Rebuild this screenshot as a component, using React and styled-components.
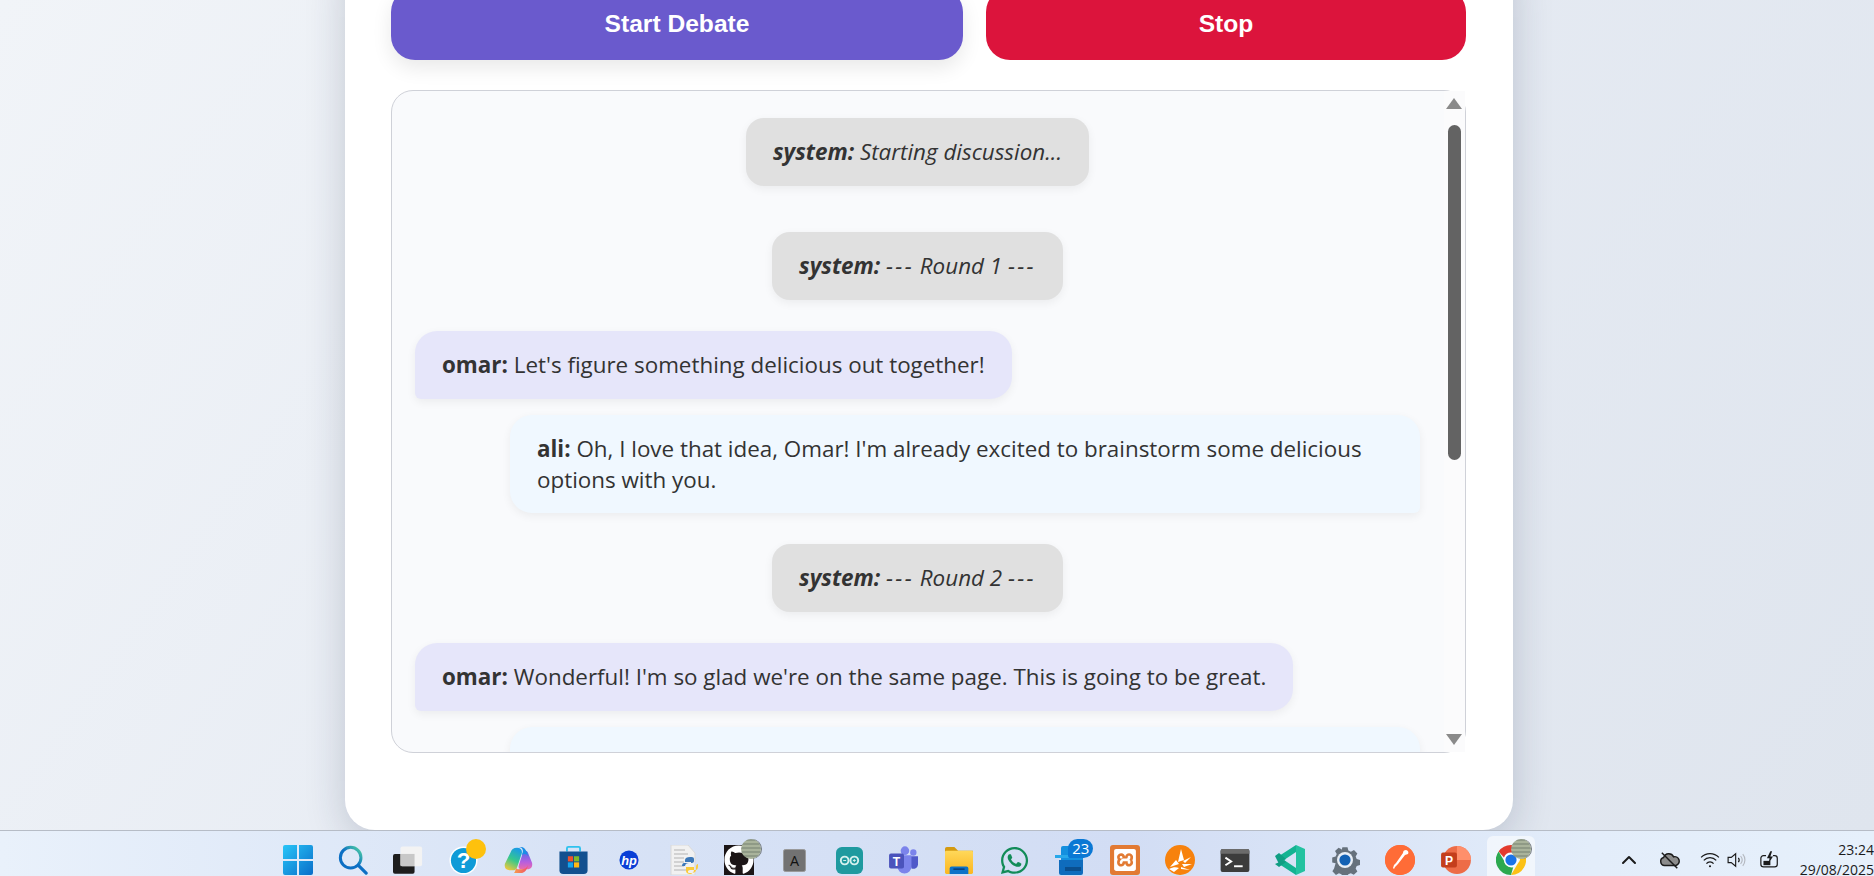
import React from "react";
import styled, { createGlobalStyle } from "styled-components";
import { FaGithub, FaWhatsapp } from "react-icons/fa";
import { SiXampp, SiPostman } from "react-icons/si";
import { FiChevronUp } from "react-icons/fi";

const GlobalStyle = createGlobalStyle`
  html, body {
    margin: 0;
    padding: 0;
    height: 100%;
    overflow: hidden;
  }
  #root {
    height: 100%;
  }
`;

const Page = styled.div`
  height: 876px;
  display: flex;
  flex-direction: column;
  font-family: "Open Sans", "Noto Sans", sans-serif;
`;

const Stage = styled.main`
  flex: 1;
  min-height: 0;
  overflow: hidden;
  display: flex;
  flex-direction: column;
  justify-content: flex-end;
  align-items: flex-start;
  padding-left: 345px;
  background: linear-gradient(125deg, #f1f4f8 0%, #e6ebf3 50%, #dfe5ee 100%);
`;

const Card = styled.section`
  flex-shrink: 0;
  box-sizing: border-box;
  width: 1168px;
  padding: 40px 47px 77px 46px;
  background: #fff;
  border-radius: 30px;
  box-shadow: 0 10px 40px rgba(30, 40, 70, 0.2);
`;

const Actions = styled.div`
  display: flex;
  gap: 23px;
  margin-bottom: 30px;
`;

const ActionButton = styled.button`
  flex: 0 0 ${(p) => p.$w}px;
  height: 72px;
  border: none;
  border-radius: 24px;
  color: #fff;
  font-family: "Liberation Sans", Arial, sans-serif;
  font-size: 24.6px;
  font-weight: 700;
  background: ${(p) => p.$bg};
  box-shadow: ${(p) => (p.$glow ? "0 8px 20px rgba(0, 0, 0, 0.09)" : "none")};
`;

const ChatBox = styled.div`
  position: relative;
  box-sizing: border-box;
  height: 663px;
  border: 1px solid #cfd1d8;
  border-radius: 22px;
  background: #f9fafc;
`;

const Messages = styled.div`
  height: 100%;
  box-sizing: border-box;
  overflow: hidden;
  border-radius: 22px;
  padding: 11.5px 45px 0 23px;
  display: flex;
  flex-direction: column;
  gap: 16px;
`;

const Bubble = styled.div`
  flex-shrink: 0;
  box-sizing: border-box;
  padding: 18.5px 27px;
  font-size: 22.4px;
  line-height: 31px;
  color: #333;
  border-radius: 22px;
  box-shadow: 0 3px 10px rgba(0, 0, 0, 0.06);
`;

const OmarBubble = styled(Bubble)`
  align-self: flex-start;
  background: #e6e6fa;
  border-bottom-left-radius: 6px;
`;

const AliBubble = styled(Bubble)`
  align-self: flex-end;
  width: 910px;
  min-height: 68px;
  padding-top: 18px;
  padding-bottom: 18px;
  background: #f0f8ff;
  border-bottom-right-radius: 6px;
`;

const SystemBubble = styled(Bubble)`
  align-self: center;
  margin: 15px 0;
  background: #e0e0e0;
  border-radius: 18px;
  font-style: italic;
`;

const Dashes = styled.span`
  letter-spacing: 2.3px;
`;

const ScrollTrack = styled.div`
  position: absolute;
  top: 0;
  right: 0;
  bottom: 0;
  width: 21px;
  background: #fbfbfc;
`;

const ScrollArrow = styled.div`
  position: absolute;
  left: 2px;
  ${(p) => (p.$down ? "bottom: 7px;" : "top: 7px;")}
  width: 0;
  height: 0;
  border-left: 8px solid transparent;
  border-right: 8px solid transparent;
  ${(p) => (p.$down ? "border-top" : "border-bottom")}: 11px solid #8a8a8a;
`;

const ScrollThumb = styled.div`
  position: absolute;
  top: 34px;
  left: 4px;
  width: 13px;
  height: 335px;
  border-radius: 7px;
  background: #636363;
`;

const Taskbar = styled.footer`
  flex: 0 0 46px;
  display: flex;
  align-items: stretch;
  box-sizing: border-box;
  padding-left: 270.4px;
  border-top: 1px solid #b6bcc6;
  overflow: hidden;
  background: linear-gradient(90deg, #e9f1fb 0%, #d8e3f6 30%, #d2ddf4 60%, #e3edfa 85%, #e6f0fb 100%);
`;

const Tile = styled.div`
  position: relative;
  flex: 0 0 55.14px;
  box-sizing: border-box;
  padding-top: 13px;
  display: flex;
  align-items: center;
  justify-content: center;
  &::before {
    content: "";
    display: ${(p) => (p.$active ? "block" : "none")};
    position: absolute;
    left: 4px;
    right: 3px;
    top: 5px;
    bottom: 0;
    border-radius: 6px 6px 0 0;
    background: rgba(255, 255, 255, 0.55);
  }
  svg {
    position: relative;
    display: block;
  }
`;

const Dot = styled.span`
  position: absolute;
  top: 8px;
  left: 30px;
  width: 20px;
  height: 20px;
  border-radius: 50%;
  background: #fec10d;
`;

const CountBadge = styled.span`
  position: absolute;
  top: 8px;
  left: 26px;
  padding: 0 4px;
  height: 19px;
  line-height: 19px;
  border-radius: 10px 10px 10px 3px;
  background: #0a78d4;
  color: #fff;
  font-size: 15px;
`;

const Spinner = styled.span`
  position: absolute;
  top: 8px;
  left: ${(p) => p.$left}px;
  width: 20px;
  height: 20px;
  border-radius: 50%;
  background: repeating-linear-gradient(0deg, #a9b39b 0 2px, #8f9a86 2px 4px);
  box-shadow: 1px 0 0 #70757c;
`;

const Tray = styled.div`
  flex: 1;
  min-width: 0;
  display: flex;
  align-items: center;
  padding: 12px 0 0 79px;
  color: #1b1b1b;
`;

const TraySlot = styled.span`
  flex: 0 0 ${(p) => p.$w}px;
  display: flex;
  justify-content: center;
`;

const Clock = styled.div`
  margin-left: auto;
  flex-shrink: 0;
  text-align: right;
  font-size: 14px;
  line-height: 20px;
  color: #1b1b1b;
  white-space: nowrap;
`;

const WindowsIcon = () => (
  <svg width="30" height="30" viewBox="0 0 30 30">
    <defs>
      <linearGradient id="win" x1="0" y1="0" x2="1" y2="1">
        <stop offset="0" stopColor="#28c5f8" />
        <stop offset="1" stopColor="#0a6ec9" />
      </linearGradient>
    </defs>
    <path fill="url(#win)" d="M2 0h12v14H0V2a2 2 0 0 1 2-2zM16 0h12a2 2 0 0 1 2 2v12H16zM0 16h14v14H2a2 2 0 0 1-2-2zM16 16h14v12a2 2 0 0 1-2 2H16z" />
  </svg>
);

const SearchIcon = () => (
  <svg width="30" height="30" viewBox="0 0 32 32" fill="none">
    <defs>
      <linearGradient id="lens" x1="0" y1="1" x2="1" y2="0">
        <stop offset="0.5" stopColor="#0c6fc4" />
        <stop offset="1" stopColor="#52d6a0" />
      </linearGradient>
    </defs>
    <circle cx="13.5" cy="13.5" r="11" stroke="url(#lens)" strokeWidth="3.2" />
    <path d="M22 22l8 8" stroke="#0c6fc4" strokeWidth="3.4" strokeLinecap="round" />
  </svg>
);

const TaskViewIcon = () => (
  <svg width="30" height="29" viewBox="0 0 32 30">
    <rect x="0" y="8" width="23" height="21" rx="2" fill="#1d1d1d" />
    <rect x="8" y="0" width="23" height="21" rx="2" fill="#f3f3f3" />
    <rect x="8" y="8" width="15" height="13" fill="#c8c8c8" />
  </svg>
);

const HelpIcon = () => (
  <svg width="29" height="29" viewBox="0 0 30 30">
    <circle cx="15" cy="15" r="14.5" fill="#fff" />
    <circle cx="15" cy="15" r="13" fill="#0f9bd7" />
    <text x="15" y="23" textAnchor="middle" fontFamily="Liberation Sans" fontWeight="700" fontSize="23" fill="#fff">?</text>
  </svg>
);

const CopilotIcon = () => (
  <svg width="30" height="28" viewBox="0 0 32 30">
    <defs>
      <linearGradient id="cpA" x1="0.6" y1="0" x2="0.2" y2="1">
        <stop offset="0" stopColor="#1b9de2" />
        <stop offset="0.5" stopColor="#37c88c" />
        <stop offset="1" stopColor="#f3c83a" />
      </linearGradient>
      <linearGradient id="cpB" x1="0.5" y1="0" x2="0.5" y2="1">
        <stop offset="0" stopColor="#4a6ce8" />
        <stop offset="0.6" stopColor="#b45fe0" />
        <stop offset="1" stopColor="#ee6aa8" />
      </linearGradient>
      <linearGradient id="cpC" x1="0" y1="0" x2="1" y2="0">
        <stop offset="0" stopColor="#f7a24a" />
        <stop offset="1" stopColor="#f0506a" />
      </linearGradient>
    </defs>
    <path fill="url(#cpB)" d="M21 8l-4 12c-1 3 0 5 3 5h6c4 0 6-3 5-7L27 8c-1-4-5-4-6 0z" />
    <path fill="url(#cpA)" d="M15 2c-4 0-6 2-7 5L2 19c-1 4 1 7 5 7h4c3 0 4-3 5-6l4-12c1-3-1-6-5-6z" />
    <path fill="#1a8fe6" d="M13 1h6c3 0 5 2 6 5l2 5c-2-3-5-3-7-1l1-3c1-3-1-6-4-6z" />
    <path fill="url(#cpC)" d="M11 29h8c4 0 6-3 7-6l1-3c-1 3-4 5-7 5h-3c-2 0-3-1-3-2-1 3-1 6-3 6z" />
  </svg>
);

const StoreIcon = () => (
  <svg width="29" height="30" viewBox="0 0 30 32">
    <path d="M8 7V3.500A1.500 1.500 0 0 1 9.500 2h11A1.500 1.500 0 0 1 22 3.500V7" fill="none" stroke="#2fc2ee" strokeWidth="2" />
    <path d="M0 7h30v20a4 4 0 0 1-4 4H4a4 4 0 0 1-4-4z" fill="#12508f" />
    <rect x="9" y="12" width="5.5" height="5.5" fill="#f0512c" />
    <rect x="15.5" y="12" width="5.5" height="5.5" fill="#7fba2a" />
    <rect x="9" y="18.5" width="5.5" height="5.5" fill="#12a5ef" />
    <rect x="15.5" y="18.5" width="5.5" height="5.5" fill="#fdb813" />
  </svg>
);

const HpIcon = () => (
  <svg width="20" height="20" viewBox="0 0 22 22">
    <circle cx="11" cy="11" r="10.5" fill="#0a3fd6" />
    <text x="11" y="16" textAnchor="middle" fontFamily="Liberation Sans" fontStyle="italic" fontWeight="700" fontSize="14" fill="#fff">hp</text>
  </svg>
);

const PyFileIcon = () => (
  <svg width="30" height="30" viewBox="0 0 30 30">
    <path d="M2 0h17l7 8v22H2z" fill="#f1f1f1" stroke="#d9d9d9" />
    <path d="M5 5h11M5 9h14M5 13h10M5 17h10M5 21h10M5 25h12" stroke="#c8c8c8" strokeWidth="1.6" />
    <path d="M21 12c-3 0-5 1-5 3v2h6v1h-7c-1 0-2 1-2 3h3c0-2 2-3 4-3h3c1 0 2-1 2-2v-2c0-2-2-2-4-2z" fill="#3d78b8" />
    <path d="M22 28c3 0 5-1 5-3v-3c0-2 1-3 2-3v2c0 3-1 4-3 4h-5c-1 0-2 1-2 1v1c0 1 1 1 3 1zM17 22h8v3c0 2-2 4-4 4s-4-1-4-3z" fill="#fbcb3b" />
  </svg>
);

const GithubTile = () => (
  <svg width="30" height="30" viewBox="0 0 30 30">
    <rect width="30" height="30" fill="#1b1516" />
    <FaGithub x="0" y="0" size="30" color="#fff" />
  </svg>
);

const LetterTile = () => (
  <svg width="23" height="23" viewBox="0 0 24 24">
    <rect x="0.5" y="0.5" width="23" height="23" rx="2" fill="#727272" stroke="#9a9a9a" />
    <text x="12" y="18" textAnchor="middle" fontFamily="Open Sans" fontSize="15" fill="#111">A</text>
  </svg>
);

const ArduinoIcon = () => (
  <svg width="27" height="27" viewBox="0 0 28 28">
    <rect width="28" height="28" rx="6" fill="#1f9a9f" />
    <circle cx="9" cy="14" r="4" fill="none" stroke="#d6f1ee" strokeWidth="2" />
    <circle cx="19" cy="14" r="4" fill="none" stroke="#d6f1ee" strokeWidth="2" />
    <path d="M7.500 14h3M17.500 14h3M19 12.500v3" stroke="#d6f1ee" strokeWidth="1" />
  </svg>
);

const TeamsIcon = () => (
  <svg width="30" height="28" viewBox="0 0 32 30">
    <circle cx="26" cy="7" r="3.4" fill="#7b83eb" />
    <circle cx="17" cy="5" r="4.6" fill="#7b83eb" />
    <path d="M21 11h10v9a5 5 0 0 1-7 4z" fill="#5059c9" />
    <path d="M9 10h15v12a7 7 0 0 1-15 0z" fill="#7b83eb" />
    <rect x="0" y="8" width="16" height="16" rx="2" fill="#4b53bc" />
    <text x="8" y="21" textAnchor="middle" fontFamily="Liberation Sans" fontWeight="700" fontSize="13" fill="#fff">T</text>
  </svg>
);

const FolderIcon = () => (
  <svg width="30" height="28" viewBox="0 0 30 30">
    <defs>
      <linearGradient id="fold" x1="0" y1="0" x2="0" y2="1">
        <stop offset="0" stopColor="#ffd85a" />
        <stop offset="1" stopColor="#fbb620" />
      </linearGradient>
    </defs>
    <path d="M0 3a2 2 0 0 1 2-2h8l4 4h16v4H0z" fill="#d49a10" />
    <rect y="5" width="30" height="25" rx="1.5" fill="url(#fold)" />
    <path d="M5 24a2 2 0 0 1 2-2h16a2 2 0 0 1 2 2v6H5z" fill="#0c72c8" />
    <rect x="9" y="24" width="12" height="1.6" fill="#0a3d78" />
  </svg>
);

const OutlookIcon = () => (
  <svg width="30" height="30" viewBox="0 0 30 30">
    <rect x="6" y="1" width="22" height="20" rx="2" fill="#1490df" />
    <path d="M4 15h24v13a2 2 0 0 1-2 2H6a2 2 0 0 1-2-2z" fill="#0f6cbd" />
    <rect x="0" y="10" width="14" height="3" fill="#28a8ea" />
    <rect x="10" y="22" width="16" height="4" fill="#0a4f8f" />
  </svg>
);

const XamppIcon = () => (
  <svg width="30" height="30" viewBox="0 0 30 30">
    <rect width="30" height="30" rx="3" fill="#e27a33" />
    <SiXampp x="4" y="4" size="22" color="#fff" />
  </svg>
);

const BurstIcon = () => (
  <svg width="30" height="30" viewBox="0 0 30 30">
    <circle cx="15" cy="15" r="15" fill="#f7820d" />
    <path d="M16 4l3 11-6 2zM26 12l-6 6-2-2zM27 19l-8 3-2-3zM11 15l3 4-9 3zM16 22l9 3-9-1zM4 24c4-2 7-2 10-1l-5 4z" fill="#fff" />
  </svg>
);

const TerminalIcon = () => (
  <svg width="30" height="23" viewBox="0 0 30 24">
    <rect width="30" height="24" rx="2" fill="#3c3c3c" />
    <path d="M0 2a2 2 0 0 1 2-2h26a2 2 0 0 1 2 2v3H0z" fill="#6b6b6b" />
    <path d="M5 9l6 4-6 4" fill="none" stroke="#fff" strokeWidth="2" />
    <rect x="14" y="17" width="9" height="2" fill="#fff" />
  </svg>
);

const CodeIcon = () => (
  <svg width="30" height="30" viewBox="0 0 30 30">
    <path d="M21 0l9 4v22l-9 4z" fill="#23c2a0" />
    <path d="M21 0v7L9 15l-5-4zM21 23v7L4 19l5-4z" fill="#14b392" />
    <path d="M0 11l4-3 7 6-2 1-5 4z" fill="#0f9e83" />
    <path d="M0 19l9-4 2 2-7 5z" fill="#0f9e83" />
  </svg>
);

const GearIcon = () => (
  <svg width="30" height="30" viewBox="0 0 30 30">
    <path fill="#66717c" d="M12 0h6l1 4 3 1.300 3.600-2 4 4.200-2 3.500 1.200 3 4 1v6l-4 1-1.200 3 2 3.500-4.200 4-3.500-2-3 1.300-1 4h-6l-1-4-3-1.200-3.500 2-4.200-4.200 2-3.500L4 19l-4-1v-6l4-1 1.300-3-2-3.500 4.200-4 3.500 2L11 4z" transform="scale(0.85) translate(2.6 2.6)" />
    <circle cx="15" cy="15" r="8" fill="#e8eef6" />
    <circle cx="15" cy="15" r="5.6" fill="#1261b4" />
  </svg>
);

const PostmanIcon = () => (
  <svg width="30" height="30" viewBox="0 0 30 30">
    <circle cx="15" cy="15" r="15" fill="#ff6c37" />
    <SiPostman x="0" y="0" size="30" color="#ff6c37" />
    <path d="M21 5a2.600 2.600 0 0 1 2 4l-3 1-7 9-3 3-1 2-1-1 1-3 2-2 7-10c0-2 1-3 3-3z" fill="#fff" />
  </svg>
);

const PowerPointIcon = () => (
  <svg width="30" height="28" viewBox="0 0 32 30">
    <circle cx="17" cy="15" r="15" fill="#ed6c47" />
    <path d="M17 0a15 15 0 0 1 15 15H17z" fill="#ff8f6b" />
    <rect x="0" y="7" width="17" height="16" rx="2" fill="#c43e1c" />
    <text x="8.5" y="20" textAnchor="middle" fontFamily="Liberation Sans" fontWeight="700" fontSize="13" fill="#fff">P</text>
  </svg>
);

const ChromeIcon = () => (
  <svg width="30" height="30" viewBox="0 0 30 30">
    <path d="M15 0a15 15 0 0 1 13 7.500H15a7.500 7.500 0 0 0-7 5L2.600 6.500A15 15 0 0 1 15 0z" fill="#e33b2e" />
    <path d="M28 7.500a15 15 0 0 1-13 22.500l6.500-11a7.500 7.500 0 0 0 0-11.500z" fill="#fbc116" />
    <path d="M2.600 6.500l5.600 9.500a7.500 7.500 0 0 0 9 6.200L15 30A15 15 0 0 1 2.600 6.500z" fill="#2da94f" />
    <circle cx="15" cy="15" r="7" fill="#fff" />
    <circle cx="15" cy="15" r="5.6" fill="#1a73e8" />
  </svg>
);

const CloudOffIcon = () => (
  <svg width="22" height="20" viewBox="0 0 24 22" fill="none" stroke="#1b1b1b" strokeWidth="1.6">
    <path d="M6 17a4.500 4.500 0 0 1-1-8.800A6 6 0 0 1 16 7.500a4.800 4.800 0 0 1 2.500 9.500z" fill="#8c8c8c" />
    <path d="M3 3l17 17" />
  </svg>
);

const WifiIcon = () => (
  <svg width="20" height="16" viewBox="0 0 22 18" fill="none" stroke="#1b1b1b" strokeWidth="1.4">
    <path d="M1 6a14 14 0 0 1 20 0M4 9.500a9.500 9.500 0 0 1 14 0M7 13a5 5 0 0 1 8 0" />
    <circle cx="11" cy="16" r="1.2" fill="#1b1b1b" stroke="none" />
  </svg>
);

const SpeakerIcon = () => (
  <svg width="20" height="16" viewBox="0 0 22 18" fill="none" stroke="#1b1b1b" strokeWidth="1.3">
    <path d="M1 6h3.500L9.500 2v14l-5-4H1z" />
    <path d="M12.500 6.500a4 4 0 0 1 0 5" />
    <path d="M15 4.500a7 7 0 0 1 0 9M17.500 2.500a10 10 0 0 1 0 13" stroke="#b5b9c0" />
  </svg>
);

const BatteryIcon = () => (
  <svg width="19" height="18" viewBox="0 0 22 20" fill="none" stroke="#1b1b1b" strokeWidth="1.4">
    <path d="M7 5H4a3 3 0 0 0-3 3v7a3 3 0 0 0 3 3h13a3 3 0 0 0 3-3V8a3 3 0 0 0-3-3h-2" />
    <rect x="4" y="11" width="8" height="5" fill="#1b1b1b" stroke="none" />
    <path d="M12 0l-4 8h3l-1 6 5-8h-3l2-6z" fill="#1b1b1b" stroke="none" />
  </svg>
);

const tiles = [
  { key: "start", icon: <WindowsIcon /> },
  { key: "search", icon: <SearchIcon /> },
  { key: "tasks", icon: <TaskViewIcon /> },
  { key: "help", icon: <HelpIcon />, over: <Dot /> },
  { key: "copilot", icon: <CopilotIcon /> },
  { key: "store", icon: <StoreIcon /> },
  { key: "hp", icon: <HpIcon /> },
  { key: "pyfile", icon: <PyFileIcon /> },
  { key: "github", icon: <GithubTile />, over: <Spinner $left={30} /> },
  { key: "letter", icon: <LetterTile /> },
  { key: "arduino", icon: <ArduinoIcon /> },
  { key: "teams", icon: <TeamsIcon /> },
  { key: "folder", icon: <FolderIcon /> },
  { key: "whatsapp", icon: <FaWhatsapp size={31} color="#128c58" /> },
  { key: "outlook", icon: <OutlookIcon />, over: <CountBadge>23</CountBadge> },
  { key: "xampp", icon: <XamppIcon /> },
  { key: "burst", icon: <BurstIcon /> },
  { key: "terminal", icon: <TerminalIcon /> },
  { key: "code", icon: <CodeIcon /> },
  { key: "gear", icon: <GearIcon /> },
  { key: "postman", icon: <PostmanIcon /> },
  { key: "ppt", icon: <PowerPointIcon /> },
  { key: "chrome", icon: <ChromeIcon />, over: <Spinner $left={28} />, active: true },
];

export default function App() {
  return (
    <Page>
      <GlobalStyle />
      <Stage>
        <Card>
          <Actions>
            <ActionButton $w={572} $bg="#6a5acd" $glow>
              Start Debate
            </ActionButton>
            <ActionButton $w={480} $bg="#dc143c">
              Stop
            </ActionButton>
          </Actions>
          <ChatBox>
            <Messages>
              <SystemBubble>
                <strong>system:</strong> Starting discussion...
              </SystemBubble>
              <SystemBubble>
                <strong>system:</strong> <Dashes>---</Dashes> Round 1 <Dashes>---</Dashes>
              </SystemBubble>
              <OmarBubble>
                <strong>omar:</strong> Let's figure something delicious out together!
              </OmarBubble>
              <AliBubble>
                <strong>ali:</strong> Oh, I love that idea, Omar! I'm already excited to brainstorm some delicious options with you.
              </AliBubble>
              <SystemBubble>
                <strong>system:</strong> <Dashes>---</Dashes> Round 2 <Dashes>---</Dashes>
              </SystemBubble>
              <OmarBubble>
                <strong>omar:</strong> Wonderful! I'm so glad we're on the same page. This is going to be great.
              </OmarBubble>
              <AliBubble />
            </Messages>
            <ScrollTrack>
              <ScrollArrow />
              <ScrollThumb />
              <ScrollArrow $down />
            </ScrollTrack>
          </ChatBox>
        </Card>
      </Stage>
      <Taskbar>
        {tiles.map((t) => (
          <Tile key={t.key} $active={t.active}>
            {t.icon}
            {t.over}
          </Tile>
        ))}
        <Tray>
          <TraySlot $w={24}>
            <FiChevronUp size={24} />
          </TraySlot>
          <TraySlot $w={57}>
            <CloudOffIcon />
          </TraySlot>
          <TraySlot $w={23}>
            <WifiIcon />
          </TraySlot>
          <TraySlot $w={32}>
            <SpeakerIcon />
          </TraySlot>
          <TraySlot $w={32}>
            <BatteryIcon />
          </TraySlot>
          <Clock>
            23:24
            <br />
            29/08/2025
          </Clock>
        </Tray>
      </Taskbar>
    </Page>
  );
}
